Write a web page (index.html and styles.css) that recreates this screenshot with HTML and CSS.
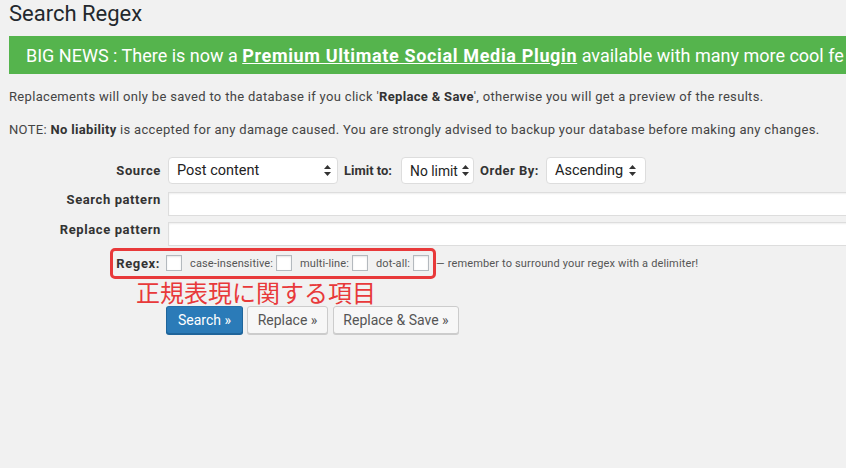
FILE: index.html
```html
<!DOCTYPE html>
<html lang="en">
<head>
<meta charset="utf-8">
<title>Search Regex</title>
<link rel="stylesheet" href="styles.css">
</head>
<body>
<div class="wrap">
  <h1 class="title">Search Regex</h1>
  <div class="news">BIG NEWS : There is now a <a href="#" class="news-link">Premium Ultimate Social Media Plugin</a> available with many more cool fe</div>
  <p class="info">Replacements will only be saved to the database if you click '<strong>Replace &amp; Save</strong>', otherwise you will get a preview of the results.</p>
  <p class="info">NOTE: <strong>No liability</strong> is accepted for any damage caused. You are strongly advised to backup your database before making any changes.</p>

  <div class="form">
    <div class="row row-source">
      <label class="lbl">Source</label>
      <div class="ctrls">
        <div class="select sel-source"><span>Post content</span><svg class="arrows" width="7" height="11" viewBox="0 0 7 11"><path d="M3.5 0 L7 4 L0 4 Z M3.5 11 L7 7 L0 7 Z" fill="#333"/></svg></div>
        <label class="inline-lbl lbl-limit">Limit to:</label>
        <div class="select sel-limit"><span>No limit</span><svg class="arrows" width="7" height="11" viewBox="0 0 7 11"><path d="M3.5 0 L7 4 L0 4 Z M3.5 11 L7 7 L0 7 Z" fill="#333"/></svg></div>
        <label class="inline-lbl lbl-order">Order By:</label>
        <div class="select sel-order"><span>Ascending</span><svg class="arrows" width="7" height="11" viewBox="0 0 7 11"><path d="M3.5 0 L7 4 L0 4 Z M3.5 11 L7 7 L0 7 Z" fill="#333"/></svg></div>
      </div>
    </div>
    <div class="row row-search row-top">
      <label class="lbl">Search pattern</label>
      <div class="ctrls"><input type="text" class="text-input"></div>
    </div>
    <div class="row row-replace row-top">
      <label class="lbl">Replace pattern</label>
      <div class="ctrls"><input type="text" class="text-input"></div>
    </div>
    <div class="row row-regex">
      <label class="lbl">Regex:</label>
      <div class="ctrls regex-ctrls">
        <span class="cb"></span>
        <span class="small-lbl">case-insensitive:</span>
        <span class="cb"></span>
        <span class="small-lbl">multi-line:</span>
        <span class="cb"></span>
        <span class="small-lbl">dot-all:</span>
        <span class="cb"></span>
        <span class="hint">— remember to surround your regex with a delimiter!</span>
      </div>
      <div class="annot-box"></div>
      <div class="annot-text">正規表現に関する項目</div>
    </div>
    <div class="row row-buttons">
      <span class="lbl"></span>
      <div class="ctrls buttons">
        <button class="btn btn-primary">Search »</button>
        <button class="btn btn-secondary btn-replace">Replace »</button>
        <button class="btn btn-secondary btn-save">Replace &amp; Save »</button>
      </div>
    </div>
  </div>
</div>
</body>
</html>
```
FILE: styles.css
```css
html, body {
  margin: 0;
  padding: 0;
  background: #f1f1f1;
  overflow: hidden;
  width: 846px;
  height: 468px;
}
body {
  font-family: Roboto, "Liberation Sans", Arial, sans-serif;
  color: #444;
  font-size: 13px;
}
.wrap {
  padding-left: 9px;
}
.title {
  margin: 0;
  padding-top: 0;
  height: 36px;
  font-size: 22px;
  line-height: 28px;
  font-weight: 400;
  color: #23282d;
}
.news {
  height: 38px;
  line-height: 39px;
  background: #55b44d;
  color: #fff;
  font-size: 18px;
  padding-left: 17px;
  white-space: nowrap;
  overflow: hidden;
  width: 820px;
}
.news-link {
  color: #fff;
  font-weight: 700;
  text-decoration: underline;
  letter-spacing: 0.65px;
}
.info {
  margin: 13px 0;
  line-height: 19.5px;
  font-size: 13px;
  letter-spacing: 0.32px;
  white-space: nowrap;
}
.info strong {
  font-weight: 700;
  color: #333;
}
.form {
  padding-top: 5px;
}
.row {
  display: grid;
  grid-template-columns: 152px 1fr;
  column-gap: 5px;
  align-items: center;
  position: relative;
}
.row-top {
  align-items: start;
}
.lbl {
  text-align: right;
  font-weight: 700;
  font-size: 13px;
  line-height: 15px;
  letter-spacing: 0.6px;
  color: #333;
}
.ctrls {
  display: flex;
  align-items: center;
}
.inline-lbl {
  font-weight: 700;
  font-size: 13px;
  color: #333;
  margin-left: 6px;
}
.lbl-order {
  letter-spacing: 0.5px;
}
.select {
  box-sizing: border-box;
  height: 27px;
  margin-left: 2px;
  background: #fff;
  border: 1px solid #ddd;
  border-radius: 4px;
  display: flex;
  align-items: center;
  justify-content: space-between;
  padding: 0 6px 0 8px;
  font-size: 14.5px;
  color: #222;
  white-space: nowrap;
}
.sel-source { width: 170px; }
.sel-limit { width: 73px; margin-left: 9px; padding-right: 4px; font-size: 13.8px; }
.sel-order { width: 100px; margin-left: 7px; padding-right: 9px; }
.arrows { flex: none; }
.row-search { margin-top: 8px; }
.row-replace { margin-top: 6px; }
.text-input {
  box-sizing: border-box;
  width: 720px;
  height: 24px;
  margin: 0 0 0 2px;
  border: 1px solid #ddd;
  background: #fff;
  box-shadow: inset 0 1px 2px rgba(0,0,0,.07);
  padding: 0 5px;
}
.row-regex {
  margin-top: 9px;
  height: 16px;
}
.row-regex .lbl { padding-right: 1px; }
.regex-ctrls { height: 16px; }
.cb {
  box-sizing: border-box;
  width: 16px;
  height: 16px;
  border: 1px solid #b4b9be;
  background: #fff;
  box-shadow: inset 0 1px 2px rgba(0,0,0,.1);
  margin-left: 3px;
  flex: none;
}
.regex-ctrls .cb:first-child { margin-left: 0; }
.small-lbl {
  font-size: 11px;
  color: #555;
  margin-left: 8px;
  letter-spacing: 0.12px;
}
.hint {
  font-size: 11px;
  color: #555;
  margin-left: 7px;
  letter-spacing: 0.15px;
}
.annot-box {
  position: absolute;
  left: 101px;
  top: -7px;
  width: 326px;
  height: 31px;
  box-sizing: border-box;
  border: 3px solid #e8393a;
  border-radius: 5px;
}
.annot-text {
  position: absolute;
  left: 127px;
  top: 25px;
  font-family: "Noto Sans CJK JP", sans-serif;
  font-size: 24px;
  line-height: 24px;
  color: #e8393a;
  white-space: nowrap;
}
.row-buttons { margin-top: 35px; }
.buttons { gap: 4px; }
.btn {
  box-sizing: border-box;
  height: 28px;
  padding: 0;
  font-family: Roboto, "Liberation Sans", Arial, sans-serif;
  font-size: 14px;
  border-radius: 3px;
  border: 1px solid #ccc;
  cursor: pointer;
}
.btn-primary {
  width: 77px;
  background: #2b7bb8;
  border-color: #2470aa #1f659b #1f659b;
  box-shadow: 0 1px 0 #1f659b;
  color: #fff;
}
.btn-secondary {
  background: #f7f7f7;
  color: #555;
  box-shadow: 0 1px 0 #ccc;
}
.btn-replace { width: 81px; }
.btn-save { width: 126px; margin-left: 1px; }
```
